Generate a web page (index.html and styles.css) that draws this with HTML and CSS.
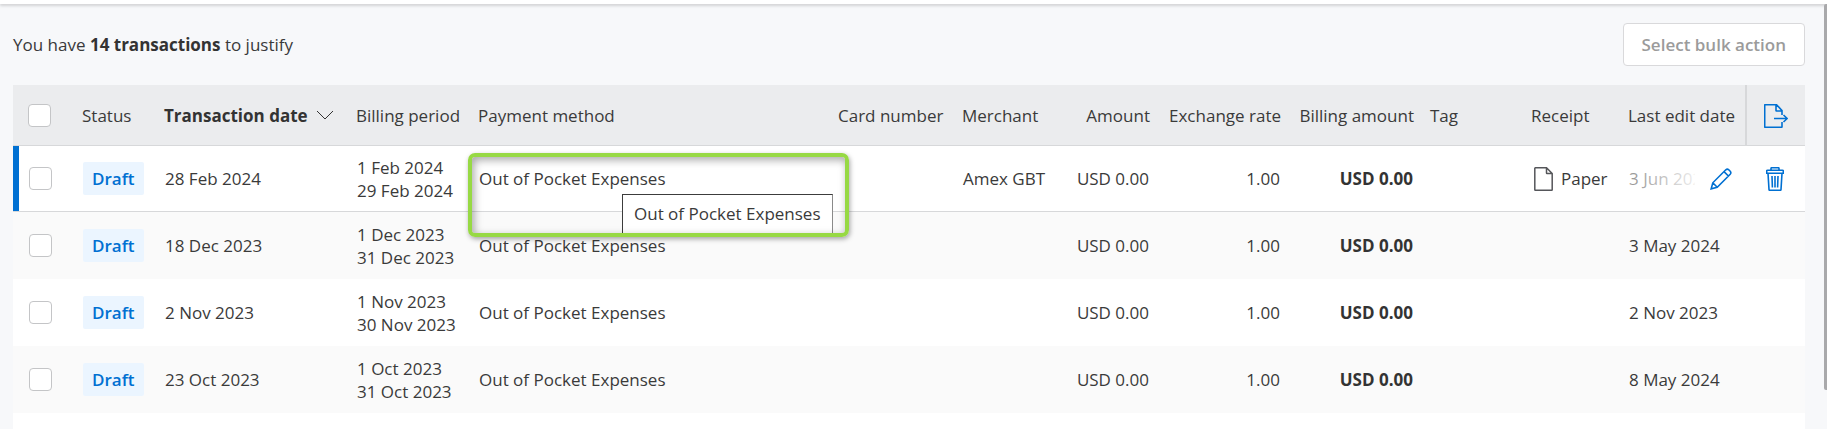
FILE: index.html
```html
<!DOCTYPE html>
<html lang="en">
<head>
<meta charset="utf-8">
<meta name="viewport" content="width=device-width, initial-scale=1">
<title>Transactions</title>
<link rel="stylesheet" href="styles.css">
</head>
<body>
<header class="topbar"></header>
<div class="shell">
  <main class="content">
    <div class="toolbar">
      <p class="summary">You have <strong>14 transactions</strong> to justify</p>
      <button class="bulk" type="button" disabled>Select bulk action</button>
    </div>
    <div class="panel">
      <table class="grid">
        <colgroup>
          <col class="c-check"><col class="c-status"><col class="c-date"><col class="c-period"><col class="c-method"><col class="c-card"><col class="c-merchant"><col class="c-amount"><col class="c-rate"><col class="c-billing"><col class="c-tag"><col class="c-receipt"><col class="c-edited"><col class="c-action">
        </colgroup>
        <thead>
          <tr>
            <th class="check"><input class="box" type="checkbox" aria-label="Select all"></th>
            <th>Status</th>
            <th class="sorted" aria-sort="descending"><button class="sort" type="button">Transaction date <svg class="chevron" viewBox="0 0 18 10" aria-hidden="true"><path d="M1 1l8 8 8-8"/></svg></button></th>
            <th>Billing period</th>
            <th>Payment method</th>
            <th>Card number</th>
            <th>Merchant</th>
            <th class="num">Amount</th>
            <th class="num">Exchange rate</th>
            <th class="num">Billing amount</th>
            <th>Tag</th>
            <th>Receipt</th>
            <th>Last edit date</th>
            <th class="action divider"><button class="icon-btn" type="button" aria-label="Export"><svg class="icon export" viewBox="0 0 24 24" aria-hidden="true"><path d="M18 11V6.500L12.500 .700H1.200Q.700 .700 .700 1.200V22.800Q.700 23.300 1.200 23.300H17.500Q18 23.300 18 22.800V18M12 1V6.500Q12 7 12.500 7H17.500M10 14.500H23M19.500 11L23.200 14.500L19.500 18"/></svg></button></th>
          </tr>
        </thead>
        <tbody>
          <tr class="active">
            <td class="check"><input class="box" type="checkbox" aria-label="Select 28 Feb 2024"></td>
            <td><span class="badge">Draft</span></td>
            <td>28 Feb 2024</td>
            <td>1 Feb 2024<br>29 Feb 2024</td>
            <td class="method">Out of Pocket Expenses<div class="tooltip" role="tooltip">Out of Pocket Expenses</div><div class="highlight"></div></td>
            <td></td>
            <td>Amex GBT</td>
            <td class="num">USD 0.00</td>
            <td class="num">1.00</td>
            <td class="num total">USD 0.00</td>
            <td></td>
            <td><span class="receipt"><svg class="paper" viewBox="0 0 19 24" aria-hidden="true"><path d="M12.500 .800H1.300Q.800 .800 .800 1.300V22.700Q.800 23.200 1.300 23.200H17.700Q18.200 23.200 18.200 22.700V6.500ZM12.500 1V6Q12.500 6.500 13 6.500H18"/></svg>Paper</span></td>
            <td class="edited">3 Jun 2024<div class="row-tools"><button class="icon-btn" type="button" aria-label="Edit"><svg class="icon pencil" viewBox="0 0 22 22" aria-hidden="true"><path d="M1.200 20.800L2.800 14.800L15.800 1.800Q17.300 .500 18.800 1.800L20.200 3.200Q21.500 4.700 20.200 6.200L7.200 19.200ZM2.800 14.800L7.200 19.200M14 3.600L18.400 8"/></svg></button></div></td>
            <td class="action"><button class="icon-btn" type="button" aria-label="Delete"><svg class="icon trash" viewBox="0 0 18 24" aria-hidden="true"><path d="M5 3V1.500Q5 .700 5.800 .700H12.200Q13 .700 13 1.500V3M1.500 3.200H16.500Q17.300 3.200 17.300 4V6.200H.700V4Q.700 3.200 1.500 3.200ZM2 6.200L3 22.500Q3 23.300 3.800 23.300H14.200Q15 23.300 15 22.500L16 6.200M6 9L6.400 20.500M9 9V20.500M12 9L11.600 20.500"/></svg></button></td>
          </tr>
          <tr>
            <td class="check"><input class="box" type="checkbox" aria-label="Select 18 Dec 2023"></td>
            <td><span class="badge">Draft</span></td>
            <td>18 Dec 2023</td>
            <td>1 Dec 2023<br>31 Dec 2023</td>
            <td>Out of Pocket Expenses</td>
            <td></td>
            <td></td>
            <td class="num">USD 0.00</td>
            <td class="num">1.00</td>
            <td class="num total">USD 0.00</td>
            <td></td>
            <td></td>
            <td>3 May 2024</td>
            <td></td>
          </tr>
          <tr>
            <td class="check"><input class="box" type="checkbox" aria-label="Select 2 Nov 2023"></td>
            <td><span class="badge">Draft</span></td>
            <td>2 Nov 2023</td>
            <td>1 Nov 2023<br>30 Nov 2023</td>
            <td>Out of Pocket Expenses</td>
            <td></td>
            <td></td>
            <td class="num">USD 0.00</td>
            <td class="num">1.00</td>
            <td class="num total">USD 0.00</td>
            <td></td>
            <td></td>
            <td>2 Nov 2023</td>
            <td></td>
          </tr>
          <tr>
            <td class="check"><input class="box" type="checkbox" aria-label="Select 23 Oct 2023"></td>
            <td><span class="badge">Draft</span></td>
            <td>23 Oct 2023</td>
            <td>1 Oct 2023<br>31 Oct 2023</td>
            <td>Out of Pocket Expenses</td>
            <td></td>
            <td></td>
            <td class="num">USD 0.00</td>
            <td class="num">1.00</td>
            <td class="num total">USD 0.00</td>
            <td></td>
            <td></td>
            <td>8 May 2024</td>
            <td></td>
          </tr>
        </tbody>
      </table>
    </div>
  </main>
  <div class="scroll-thumb"></div>
</div>
</body>
</html>
```

FILE: styles.css
```css
* { box-sizing: border-box; }

body {
  margin: 0;
  min-height: 100vh;
  display: flex;
  flex-direction: column;
  background: #f7f8fa;
  color: #3a3a3a;
  font: 17px/23px "Open Sans", sans-serif;
}

.topbar {
  height: 4px;
  background: #fff;
  box-shadow: 0 2px 3px rgba(0, 0, 0, 0.15);
}

.shell { flex: 1; display: flex; }

.content {
  flex: 1;
  display: flex;
  flex-direction: column;
  padding: 19px 19px 0 13px;
}

.scroll-thumb {
  width: 3px;
  margin-bottom: 39px;
  background: #a9a9ab;
  border-radius: 2px 0 0 2px;
}

.toolbar {
  display: flex;
  justify-content: space-between;
  align-items: center;
  margin-bottom: 19px;
}

.summary { margin: 0; }
.summary strong { font-weight: 700; color: #333; }

.bulk {
  height: 43px;
  padding: 0 18px;
  border: 1px solid #d9d9db;
  border-radius: 4px;
  background: #fff;
  color: #9b9b9b;
  font: inherit;
  font-weight: 600;
}

.panel { flex: 1; background: #fff; }

.grid {
  width: 100%;
  table-layout: fixed;
  border-collapse: separate;
  border-spacing: 0;
}

.c-check { width: 61px; }
.c-status { width: 82px; }
.c-date { width: 192px; }
.c-period { width: 122px; }
.c-card { width: 124px; }
.c-merchant { width: 96px; }
.c-amount { width: 108px; }
.c-rate { width: 131px; }
.c-billing { width: 133px; }
.c-tag { width: 101px; }
.c-receipt { width: 97px; }
.c-edited { width: 125px; }
.c-action { width: 60px; }

.grid th {
  height: 61px;
  padding: 0 8px;
  background: #ebecee;
  border-bottom: 1px solid #d7d8da;
  font-weight: 400;
  text-align: left;
  white-space: nowrap;
}

.grid td {
  height: 67px;
  padding: 0 9px;
  white-space: nowrap;
}

.grid .num { text-align: right; }
.grid .total { font-weight: 700; color: #333; }
.grid th.check { padding: 0 0 0 15px; }
.grid td.check { padding: 0 0 0 16px; }
.grid .action { padding: 0; text-align: center; }
.grid th.divider { border-left: 2px solid #d7d8da; }

tbody tr:nth-child(even) { background: #fafafa; }

.grid .active td { height: 66px; border-bottom: 1px solid #d7d8da; }
.grid .active td.check { box-shadow: inset 6px 0 0 #0070d2; }

.box {
  appearance: none;
  display: block;
  width: 23px;
  height: 23px;
  margin: 0;
  border: 1px solid #c4c5c7;
  border-radius: 4px;
  background: #fff;
}

.sort {
  display: flex;
  align-items: center;
  gap: 8px;
  padding: 0;
  border: 0;
  background: none;
  color: #333;
  font: inherit;
  font-weight: 700;
}

.badge {
  display: inline-block;
  padding: 5px 9px;
  border-radius: 2px;
  background: #ebf5ff;
  color: #0070d2;
  font-weight: 600;
}

svg { display: block; fill: none; stroke: currentColor; }
.chevron { width: 18px; height: 10px; }
.paper { width: 19px; height: 24px; color: #55565a; stroke-width: 1.5; }
.icon { stroke-width: 1.6; }
.export { width: 24px; height: 24px; }
.pencil { width: 22px; height: 22px; }
.trash { width: 18px; height: 24px; }

.icon-btn {
  display: inline-block;
  padding: 0;
  border: 0;
  background: none;
  color: #0070d2;
  vertical-align: middle;
}

.receipt { display: flex; align-items: center; gap: 8px; padding-left: 2px; }

.edited { position: relative; }
.row-tools {
  position: absolute;
  inset: 0;
  display: flex;
  align-items: center;
  justify-content: flex-end;
  padding-right: 13px;
  background: linear-gradient(to right, rgba(255, 255, 255, 0.4), rgba(255, 255, 255, 0.9) 74px, #fff 75px);
}

.method { position: relative; }

.tooltip {
  position: absolute;
  top: 48px;
  left: 152px;
  height: 39px;
  padding: 7px 11px;
  border: 1px solid #3c3c3c;
  border-right-color: #8a8a8a;
  border-bottom: 0;
  background: #fff;
}

.highlight {
  position: absolute;
  top: 7px;
  left: -2px;
  right: -19px;
  height: 84px;
  border: 4px solid #97d944;
  border-radius: 7px;
  box-shadow: 1px 2px 5px rgba(0, 0, 0, 0.35), inset 2px 3px 8px rgba(0, 0, 0, 0.35);
}
```
